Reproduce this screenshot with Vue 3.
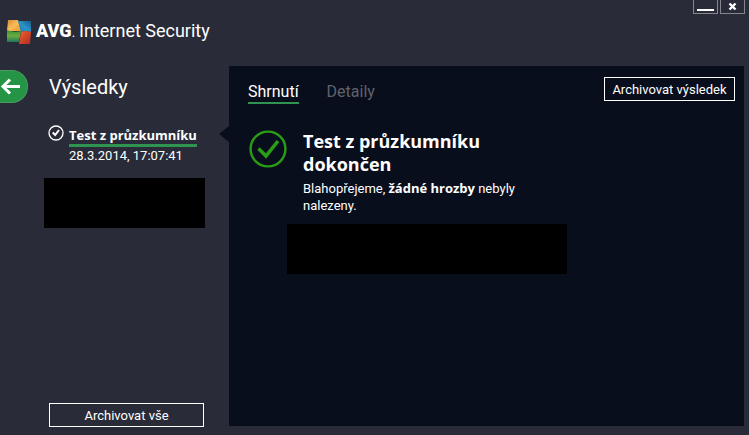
<script setup>
import { ref } from "vue";

// Záložky v pravém panelu
const tabs = ["Shrnutí", "Detaily"];
const activeTab = ref("Shrnutí");

// Seznam provedených testů
const results = ref([
  { id: 1, name: "Test z průzkumníku", date: "28.3.2014, 17:07:41" },
]);
</script>

<template>
  <div class="window">
    <header class="titlebar">
      <div class="brand">
        <svg class="logo" viewBox="0 0 26 26" aria-hidden="true">
          <defs>
            <linearGradient id="orange" x1="0" y1="0" x2="1" y2="1">
              <stop offset="0" stop-color="#d9862f" />
              <stop offset="0.5" stop-color="#f9bd58" />
              <stop offset="1" stop-color="#ee9a2c" />
            </linearGradient>
            <linearGradient id="blue" x1="0" y1="1" x2="1" y2="0">
              <stop offset="0" stop-color="#1d7fb8" />
              <stop offset="0.5" stop-color="#2a93c8" />
              <stop offset="1" stop-color="#1b5c86" />
            </linearGradient>
            <linearGradient id="green" x1="0" y1="0" x2="0" y2="1">
              <stop offset="0" stop-color="#3c8f38" />
              <stop offset="0.5" stop-color="#69ad3f" />
              <stop offset="1" stop-color="#1f7560" />
            </linearGradient>
            <linearGradient id="red" x1="0" y1="0" x2="1" y2="1">
              <stop offset="0" stop-color="#f0642c" />
              <stop offset="1" stop-color="#b02a22" />
            </linearGradient>
          </defs>
          <path d="M1 1H11L14 12H0Z" fill="url(#orange)" />
          <path d="M11 2H24V13Q19 11 14 13Z" fill="url(#blue)" />
          <path d="M0 11Q7 14 14 12L12 23H0Z" fill="url(#green)" />
          <path d="M14 13Q19 11 24 13L23 25H12Z" fill="url(#red)" />
        </svg>
        <p class="name">
          <span class="avg">AVG</span><span class="dot">.</span>
          <span class="product">Internet Security</span>
        </p>
      </div>
      <div class="controls">
        <button type="button" aria-label="Minimalizovat">
          <svg viewBox="0 0 23 13"><path d="M3 10H20" stroke="#fff" stroke-width="2" /></svg>
        </button>
        <button type="button" aria-label="Zavřít">
          <svg viewBox="0 0 23 13">
            <path d="M8.5 3.5L14.5 9.5M14.5 3.5L8.5 9.5" stroke="#fff" stroke-width="2.4" />
          </svg>
        </button>
      </div>
    </header>

    <div class="body">
      <aside class="sidebar">
        <div class="sidebarHead">
          <button type="button" class="back" aria-label="Zpět">
            <svg viewBox="0 0 27 31">
              <path
                d="M3 15.5H20M10 8.5L3 15.5L10 22.5"
                fill="none"
                stroke="#fff"
                stroke-width="3"
              />
            </svg>
          </button>
          <h1>Výsledky</h1>
        </div>

        <ul class="results">
          <li v-for="result in results" :key="result.id">
            <svg class="resultIcon" viewBox="0 0 16 16" aria-hidden="true">
              <circle cx="8" cy="8" r="7" fill="none" stroke="#fff" stroke-width="1.3" />
              <path d="M4.8 7.5L7.2 10L11 5" fill="none" stroke="#fff" stroke-width="2" />
            </svg>
            <div>
              <a href="#" @click.prevent>{{ result.name }}</a>
              <p>{{ result.date }}</p>
            </div>
          </li>
        </ul>
        <div class="block"></div>

        <button type="button" class="outline archiveAll">Archivovat vše</button>
      </aside>

      <main class="panel">
        <div class="toolbar">
          <nav class="tabs">
            <button
              v-for="tab in tabs"
              :key="tab"
              type="button"
              :class="{ active: tab === activeTab }"
              @click="activeTab = tab"
            >
              {{ tab }}
            </button>
          </nav>
          <button type="button" class="outline archive">Archivovat výsledek</button>
        </div>

        <section class="summary">
          <svg class="okIcon" viewBox="0 0 38 38" aria-hidden="true">
            <circle cx="19" cy="19" r="17.4" fill="none" stroke="#2a9d16" stroke-width="2.4" />
            <path d="M9.5 18.5L17 26L29 11" fill="none" stroke="#2a9d16" stroke-width="3.6" />
          </svg>
          <div class="message">
            <h2>Test z průzkumníku dokončen</h2>
            <p>Blahopřejeme, <strong>žádné hrozby</strong> nebyly nalezeny.</p>
          </div>
        </section>
        <div class="block wide"></div>
      </main>
    </div>
  </div>
</template>

<style>
body {
  background: #292b38;
}
</style>

<style scoped>
.window {
  display: flex;
  flex-direction: column;
  box-sizing: border-box;
  min-height: 100vh;
  background: #292b38;
  color: #fff;
  font-family: Roboto, "Liberation Sans", sans-serif;
  font-size: 13px;
  line-height: 17px;
}

h1,
h2,
p,
ul {
  margin: 0;
  padding: 0;
}

button {
  margin: 0;
  padding: 0;
  border: 0;
  background: none;
  color: inherit;
  font: inherit;
  cursor: pointer;
}

svg {
  display: block;
  flex: none;
}

.titlebar {
  display: flex;
  justify-content: space-between;
  align-items: flex-start;
  height: 66px;
}

.brand {
  display: flex;
  align-items: center;
  padding: 18px 0 0 7px;
}

.logo {
  width: 26px;
  height: 26px;
  margin-right: 3px;
}

.name {
  display: flex;
  align-items: baseline;
  font-size: 18px;
  line-height: 26px;
}

.avg {
  font-weight: 900;
}

.dot {
  margin-right: 4px;
  font-size: 13px;
}

.controls {
  display: flex;
  gap: 2px;
  padding-right: 4px;
}

.controls button {
  border: 1px solid #85868d;
  border-top: 0;
}

.controls svg {
  width: 23px;
  height: 13px;
}

.body {
  display: flex;
  flex: 1;
  padding: 0 5px 9px 0;
}

.sidebar {
  position: relative;
  display: flex;
  flex-direction: column;
  flex: none;
  box-sizing: border-box;
  width: 229px;
  padding: 4px 24px 0 0;
}

/* šipka ukazující na vybraný výsledek */
.sidebar::after {
  content: "";
  position: absolute;
  top: 60px;
  right: 0;
  border: 8px solid transparent;
  border-right: 10px solid #090e1c;
  border-left: 0;
}

.sidebarHead {
  display: flex;
  align-items: flex-start;
  gap: 21px;
}

.back {
  box-sizing: border-box;
  height: 33px;
  border: 1px solid #4a9a61;
  border-left: 0;
  border-radius: 0 16px 16px 0;
  background: #259444;
}

.back svg {
  width: 27px;
  height: 31px;
}

h1 {
  font-size: 20px;
  font-weight: 400;
  line-height: 35px;
}

.results {
  padding: 20px 0 14px 48px;
  list-style: none;
}

.results li {
  display: flex;
  gap: 5px;
}

.resultIcon {
  width: 16px;
  height: 16px;
}

.results a,
h2,
strong {
  font-family: "Open Sans", "Noto Sans", sans-serif;
  font-weight: 700;
}

.results a {
  display: block;
  padding-top: 2px;
  border-bottom: 3px solid #2e9450;
  color: #fff;
  line-height: 17px;
  text-decoration: none;
  white-space: nowrap;
}

.block {
  height: 50px;
  margin-left: 44px;
  background: #000;
}

.outline {
  box-sizing: border-box;
  height: 24px;
  border: 1px solid #fff;
}

.archiveAll {
  margin: auto 1px -1px 49px;
}

.panel {
  flex: 1;
  min-width: 0;
  background: #090e1c;
}

.toolbar {
  display: flex;
  justify-content: space-between;
  padding: 11px 9px 0 19px;
}

.tabs {
  display: flex;
  gap: 28px;
  padding-top: 4px;
}

.tabs button {
  height: 23px;
  border-bottom: 2px solid transparent;
  color: #5f626b;
  font-size: 16px;
  line-height: 21px;
}

.tabs .active {
  border-color: #2e9450;
  color: #fff;
}

.archive {
  width: 131px;
}

.summary {
  display: flex;
  gap: 16px;
  padding: 26px 20px 10px 20px;
}

.okIcon {
  width: 38px;
  height: 38px;
}

.message {
  max-width: 230px;
}

h2 {
  font-size: 18px;
  line-height: 23px;
}

.message p {
  padding-top: 4px;
}

strong {
  line-height: 1;
}

.wide {
  width: 280px;
  max-width: 80%;
  margin-left: 58px;
}
</style>
